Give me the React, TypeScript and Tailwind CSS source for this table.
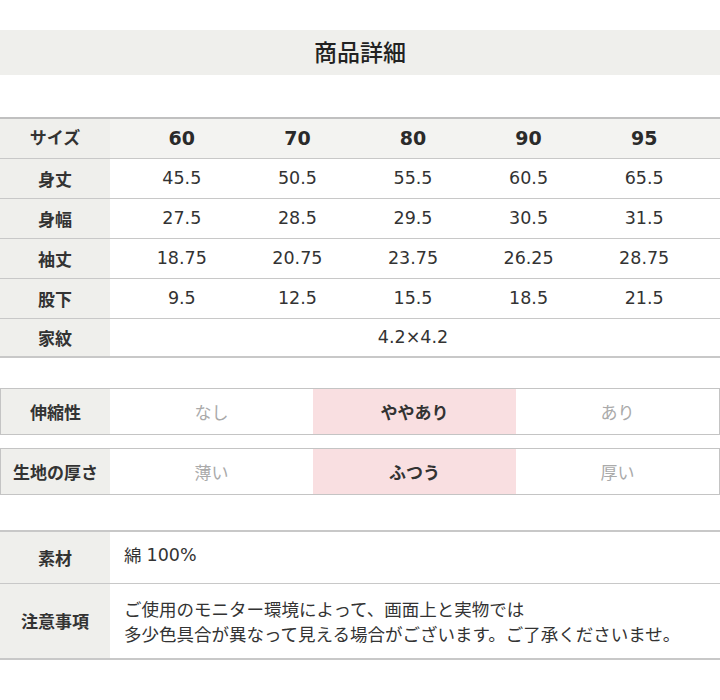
import React from "react";

const font = { fontFamily: '"Noto Sans CJK JP", "Noto Sans", sans-serif' };
const num = { fontFamily: '"DejaVu Sans", "Noto Sans CJK JP", sans-serif' };

const sizes = ["60", "70", "80", "90", "95"];
const rows: [string, string[]][] = [
  ["身丈", ["45.5", "50.5", "55.5", "60.5", "65.5"]],
  ["身幅", ["27.5", "28.5", "29.5", "30.5", "31.5"]],
  ["袖丈", ["18.75", "20.75", "23.75", "26.25", "28.75"]],
  ["股下", ["9.5", "12.5", "15.5", "18.5", "21.5"]],
];

function Scale({ label, opts, sel }: { label: string; opts: string[]; sel: number }) {
  return (
    <div className="flex h-[47px] border border-[#c4c4c4]">
      <div className="w-[109px] bg-[#efefec] flex items-center justify-center text-[17px] font-bold text-[#333]">{label}</div>
      {opts.map((o, i) => (
        <div
          key={o}
          className={
            i === sel
              ? "flex-1 bg-[#f9dfe1] flex items-center justify-center text-[17px] font-bold text-[#333]"
              : "flex-1 bg-white flex items-center justify-center text-[17px] text-[#aaa]"
          }
        >
          {o}
        </div>
      ))}
    </div>
  );
}

export default function App() {
  return (
    <div className="w-[720px] h-[700px] bg-white text-[#333] overflow-hidden" style={font}>
      <div className="h-[30px]" />
      <div className="h-[45px] bg-[#efefec] flex items-center justify-center text-[23px] font-medium text-[#222] pb-[2px]">商品詳細</div>
      <div className="h-[42px]" />
      <div className="border-t-2 border-[#c0c0c0]">
        <div className="flex h-[40px] border-b border-[#c8c8c8] bg-[#f3f3f1]">
          <div className="w-[110px] bg-[#efefec] flex items-center justify-center text-[17px] font-bold pb-[4px]">サイズ</div>
          <div className="flex-1 flex pl-[14px] pr-[18px]">
            {sizes.map((s) => (
              <div key={s} className="flex-1 flex items-center justify-center text-[19px] font-bold text-[#2a2a2a]" style={num}>{s}</div>
            ))}
          </div>
        </div>
        {rows.map(([l, vals]) => (
          <div key={l} className="flex h-[40px] border-b border-[#c8c8c8]">
            <div className="w-[110px] bg-[#efefec] flex items-center justify-center text-[17px] font-bold">{l}</div>
            <div className="flex-1 flex pl-[14px] pr-[18px]">
              {vals.map((v, i) => (
                <div key={i} className="flex-1 flex items-center justify-center text-[17.5px] text-[#333]" style={num}>{v}</div>
              ))}
            </div>
          </div>
        ))}
        <div className="flex h-[39px] border-b-2 border-[#c8c8c8]">
          <div className="w-[110px] bg-[#efefec] flex items-center justify-center text-[17px] font-bold">家紋</div>
          <div className="flex-1 flex items-center justify-center text-[17.5px] pr-[4px]" style={num}>4.2×4.2</div>
        </div>
      </div>
      <div className="h-[30px]" />
      <Scale label="伸縮性" opts={["なし", "ややあり", "あり"]} sel={1} />
      <div className="h-[13px]" />
      <Scale label="生地の厚さ" opts={["薄い", "ふつう", "厚い"]} sel={1} />
      <div className="h-[35px]" />
      <div className="border-t-2 border-b-2 border-[#c8c8c8]">
        <div className="flex h-[52px] border-b border-[#c8c8c8]">
          <div className="w-[110px] bg-[#efefec] flex items-center justify-center text-[17px] font-bold">素材</div>
          <div className="flex-1 flex items-center pl-[14px] text-[17.5px] pb-[4px]">
            綿 <span className="ml-[5px]" style={num}>100%</span>
          </div>
        </div>
        <div className="flex h-[74px]">
          <div className="w-[110px] bg-[#efefec] flex items-center justify-center text-[17px] font-bold">注意事項</div>
          <div className="flex-1 flex flex-col justify-center pl-[14px] text-[17.5px] leading-[25px]">
            <div>ご使用のモニター環境によって、画面上と実物では</div>
            <div>多少色具合が異なって見える場合がございます。ご了承くださいませ。</div>
          </div>
        </div>
      </div>
    </div>
  );
}
